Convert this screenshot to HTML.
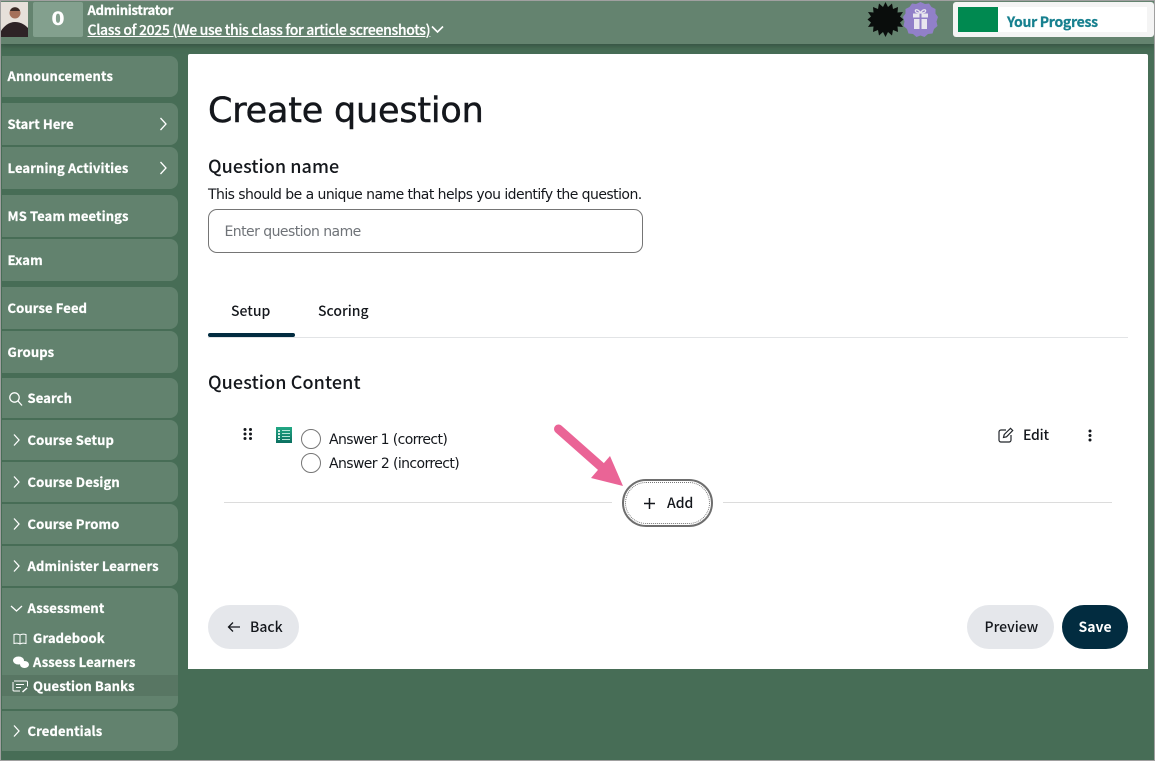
<!DOCTYPE html>
<html><head><meta charset="utf-8">
<style>
html,body{margin:0;padding:0}
body{width:1155px;height:761px;overflow:hidden;position:relative;background:#476d56;font-family:"DejaVu Sans","Liberation Sans",sans-serif;color:#14171c}
.t{position:absolute;white-space:nowrap;line-height:1}
.b{position:absolute}
.it{position:absolute;left:2px;width:176px;background:#62826e;border-radius:0 8px 8px 0}
.s{position:absolute;white-space:nowrap;line-height:1;font:bold 13px/1 "Noto Sans CJK JP","DejaVu Sans",sans-serif;color:#fff;letter-spacing:.12px;-webkit-text-stroke:.25px #fff}
.r{font-size:14px;letter-spacing:-.55px}
svg{position:absolute;overflow:visible}
</style></head><body>
<div class="b" style="left:0;top:0;width:1155px;height:1px;background:#a0a0a0;z-index:5"></div>
<div class="b" style="left:0;top:0;width:1px;height:761px;background:#a0a0a0;z-index:5"></div>
<div class="b" style="right:0;top:0;width:1px;height:761px;background:#a0a0a0;z-index:5"></div>
<div class="b" style="left:0;bottom:0;width:1155px;height:1px;background:#a0a0a0;z-index:5"></div>

<div class="b" style="left:0;top:1px;width:1155px;height:43px;background:#64836f;box-shadow:0 2px 5px rgba(40,60,50,.55)"></div>
<svg style="left:1px;top:2px" width="27" height="35" viewBox="0 0 27 35">
<rect width="27" height="35" fill="#e6e0da"/><circle cx="14" cy="11" r="5.500" fill="#a5705a"/><path d="M9 9c1-5 9-5 10 0" fill="#3a2a26"/><path d="M0 35v-6c3-5 8-9 14-9s10 3 13 6v9z" fill="#2e2326"/>
</svg>
<div class="b" style="left:33px;top:2px;width:50px;height:35px;background:#83a08e;border-radius:2px"></div>
<div class="t" style="left:33px;top:10px;width:50px;text-align:center;color:#fff;font-size:19px;font-weight:bold">0</div>
<div class="s" style="left:87.500px;top:3px;font-size:13px;letter-spacing:-.25px">Administrator</div>
<div class="s" style="left:87.500px;top:22.500px;font-size:14px;font-weight:500;text-decoration:underline;letter-spacing:-.33px">Class of 2025 (We use this class for article screenshots)</div>
<svg style="left:431px;top:25px" width="13" height="9" viewBox="0 0 13 9"><path d="M1 1.500l5.500 5.500 5.500-5.500" fill="none" stroke="#fff" stroke-width="1.600"/></svg>

<svg style="left:867px;top:1px" width="37" height="37" viewBox="0 0 37 37">
<polygon fill="#0a0d0c" points="18.500,1 21,6 25,2.500 26,8 31,6 30.500,11.500 36,11 33,15.500 36.500,18.500 33,21.500 36,26 30.500,25.500 31,31 26,29 25,34.500 21,31 18.500,36 16,31 12,34.500 11,29 6,31 6.500,25.500 1,26 4,21.500 .5,18.500 4,15.500 1,11 6.500,11.500 6,6 11,8 12,2.500 16,6"/>
</svg>
<svg style="left:903px;top:2px" width="35" height="35" viewBox="0 0 35 35">
<polygon fill="#9180c8" points="17.500,0 22,2 26,1.500 28.500,5 32.500,7 32.500,11.500 35,15 33.500,19.500 34.500,24 31,27 29.500,31.500 25,32 21.500,35 17.500,33.500 13.500,35 10,32 5.500,31.500 4,27 .5,24 1.500,19.500 0,15 2.500,11.500 2.500,7 6.500,5 9,1.500 13,2"/>
<rect x="10" y="11.500" width="15" height="4" fill="#e8e6ee"/><rect x="11" y="17" width="13" height="10" fill="#e8e6ee"/><rect x="16.500" y="11.500" width="2" height="16" fill="#9180c8"/>
<path d="M17.500 11c-2-4-6-4-5-1.500.5 1 3 1.500 5 1.500zm0 0c2-4 6-4 5-1.500-.5 1-3 1.500-5 1.500z" fill="none" stroke="#e8e6ee" stroke-width="1.300"/>
</svg>
<div class="b" style="left:953px;top:2px;width:201px;height:35px;background:#f4f4f4;border-radius:3px"></div>
<div class="b" style="left:958px;top:7px;width:189px;height:25px;background:#fff"></div>
<div class="b" style="left:958px;top:7px;width:40px;height:25px;background:#008950"></div>
<div class="s" style="left:1007px;top:15px;font-size:14px;color:#17808f;-webkit-text-stroke:.25px #17808f;letter-spacing:-.3px">Your Progress</div>

<div class="it" style="top:56px;height:41px"></div>
<div class="it" style="top:103px;height:42px"></div>
<div class="it" style="top:147px;height:42px"></div>
<div class="it" style="top:195px;height:42px"></div>
<div class="it" style="top:239px;height:42px"></div>
<div class="it" style="top:287px;height:42px"></div>
<div class="it" style="top:331px;height:42px"></div>
<div class="it" style="top:378px;height:40px"></div>
<div class="it" style="top:420px;height:40px"></div>
<div class="it" style="top:462px;height:40px"></div>
<div class="it" style="top:504px;height:40px"></div>
<div class="it" style="top:546px;height:40px"></div>
<div class="it" style="top:588px;height:121px"></div>
<div class="it" style="top:711px;height:40px"></div>
<div class="b" style="left:2px;top:675px;width:176px;height:21px;background:#587663"></div>

<div class="s" style="left:7.500px;top:69px">Announcements</div>
<div class="s" style="left:7.500px;top:117px">Start Here</div>
<div class="s" style="left:7.500px;top:161px">Learning Activities</div>
<div class="s" style="left:7.500px;top:209px">MS Team meetings</div>
<div class="s" style="left:7.500px;top:253px">Exam</div>
<div class="s" style="left:7.500px;top:301px">Course Feed</div>
<div class="s" style="left:7.500px;top:345px">Groups</div>
<div class="s" style="left:27.500px;top:391px">Search</div>
<div class="s" style="left:27.500px;top:433px">Course Setup</div>
<div class="s" style="left:27.500px;top:475px">Course Design</div>
<div class="s" style="left:27.500px;top:517px">Course Promo</div>
<div class="s" style="left:27.500px;top:559px">Administer Learners</div>
<div class="s" style="left:27.500px;top:601px">Assessment</div>
<div class="s" style="left:33px;top:631px">Gradebook</div>
<div class="s" style="left:33px;top:655px">Assess Learners</div>
<div class="s" style="left:33px;top:679px">Question Banks</div>
<div class="s" style="left:27.500px;top:724px">Credentials</div>

<svg style="left:0;top:0" width="190" height="761" fill="none" stroke="#fff" stroke-width="1.300">
<path d="M160.500 118l5.500 6-5.500 6M160.500 162l5.500 6-5.500 6"/>
<path d="M14 434.500l5 5.500-5 5.500M14 476.500l5 5.500-5 5.500M14 518.500l5 5.500-5 5.500M14 560.500l5 5.500-5 5.500M14 725.500l5 5.500-5 5.500"/>
<path d="M11 606l5.500 5 5.500-5"/>
<circle cx="14.500" cy="397.500" r="4.700"/><path d="M18 401l4 4.500"/>
<path d="M20 635c-1.500-1-4-1-6-.5v9c2-.5 4.500-.5 6 .5 1.500-1 4-1 6-.5v-9c-2-.5-4.500-.5-6 .5zm0 0v9" stroke-width="1"/>
<path d="M14 681h12.500c.5 0 1 .5 1 1v4.500M20 691h-6c-.5 0-1-.5-1-1v-8M16 684.500h8M16 687.500h5" stroke-width="1"/>
<path d="M22.500 692l4.500-4" stroke-width="1.500"/>
<ellipse cx="18.500" cy="660.500" rx="5.500" ry="4" fill="#fff" stroke="none"/><ellipse cx="24.500" cy="664.500" rx="4.500" ry="3.500" fill="#fff" stroke="none"/>
</svg>

<div class="b" style="left:188px;top:54px;width:960px;height:615px;background:#fff;border-radius:2px 2px 0 0"></div>
<div class="t" style="left:208px;top:94px;font-size:35px;letter-spacing:-.2px;color:#14171c;-webkit-text-stroke:.45px #14171c">Create question</div>
<div class="t" style="left:208px;top:157px;font-size:18px;font-weight:500;font-family:'Noto Sans CJK JP',sans-serif;letter-spacing:.05px">Question name</div>
<div class="t r" style="left:208px;top:187.500px">This should be a unique name that helps you identify the question.</div>
<div class="b" style="left:208px;top:209px;width:433px;height:42px;border:1px solid #757575;border-radius:9px"></div>
<div class="t r" style="left:224.500px;top:224.500px;color:#6f7378">Enter question name</div>
<div class="t" style="left:231px;top:304px;font-size:14px;font-weight:500;font-family:'Noto Sans CJK JP',sans-serif">Setup</div>
<div class="t" style="left:318px;top:304px;font-size:14px;font-weight:500;font-family:'Noto Sans CJK JP',sans-serif">Scoring</div>
<div class="b" style="left:208px;top:337px;width:920px;height:1px;background:#e2e4e6"></div>
<div class="b" style="left:208px;top:333px;width:87px;height:4px;background:#022c40;border-radius:2px"></div>
<div class="t" style="left:208px;top:373px;font-size:18px;font-weight:500;font-family:'Noto Sans CJK JP',sans-serif;letter-spacing:.1px">Question Content</div>

<svg style="left:243px;top:427px" width="10" height="14" fill="#14171c"><circle cx="2" cy="2.500" r="1.500"/><circle cx="7.500" cy="2.500" r="1.500"/><circle cx="2" cy="7" r="1.500"/><circle cx="7.500" cy="7" r="1.500"/><circle cx="2" cy="11.500" r="1.500"/><circle cx="7.500" cy="11.500" r="1.500"/></svg>
<svg style="left:276px;top:427px" width="16" height="16" viewBox="0 0 16 16"><defs><linearGradient id="g" x1="0" y1="0" x2="0" y2="1"><stop offset="0" stop-color="#22a884"/><stop offset="1" stop-color="#0b6f60"/></linearGradient></defs><rect width="16" height="16" fill="url(#g)"/><path d="M6 3.500h8M6 6.500h8M6 9.500h8M6 12.500h8" stroke="#b7e6d8" stroke-width="1"/><path d="M3 3v10" stroke="#d5f0e8" stroke-width="2" stroke-dasharray="2 1"/></svg>
<div class="b" style="left:301px;top:429px;width:18px;height:18px;border:1px solid #767676;border-radius:50%"></div>
<div class="b" style="left:301px;top:453px;width:18px;height:18px;border:1px solid #767676;border-radius:50%"></div>
<div class="t r" style="left:329px;top:432.500px;letter-spacing:-.62px">Answer 1 (correct)</div>
<div class="t r" style="left:329px;top:456.500px;letter-spacing:-.6px">Answer 2 (incorrect)</div>

<svg style="left:998px;top:427px" width="16" height="16" viewBox="0 0 16 16" fill="none" stroke="#22262b" stroke-width="1.200"><path d="M8 3H3a2 2 0 00-2 2v8a2 2 0 002 2h8a2 2 0 002-2V8"/><path d="M5.500 10.500l.7-3L12.500 1.300l2.200 2.200L8.500 9.800z"/></svg>
<div class="t" style="left:1023px;top:428px;font-size:14px;font-weight:500;font-family:'Noto Sans CJK JP',sans-serif;letter-spacing:-.2px">Edit</div>
<svg style="left:1087px;top:429px" width="6" height="13" fill="#14171c"><circle cx="3" cy="2" r="1.500"/><circle cx="3" cy="6.500" r="1.500"/><circle cx="3" cy="11" r="1.500"/></svg>

<div class="b" style="left:224px;top:502px;width:388px;height:1px;background:#dcdcdc"></div>
<div class="b" style="left:723px;top:502px;width:389px;height:1px;background:#dcdcdc"></div>
<div class="b" style="left:622px;top:479px;width:87px;height:44px;border:2px solid #6e6e6e;border-radius:24px;background:#fff"></div>
<div class="b" style="left:625px;top:482px;width:83px;height:40px;border:1px dotted #777;border-radius:21px"></div>
<svg style="left:643px;top:497px" width="13" height="13"><path d="M6.500 1v11M1 6.500h11" stroke="#14171c" stroke-width="1.500"/></svg>
<div class="t" style="left:667px;top:496px;font-size:14px;font-weight:500;font-family:'Noto Sans CJK JP',sans-serif">Add</div>
<svg style="left:550px;top:420px" width="80" height="70"><path d="M8.500 9L56 51" stroke="#ea6496" stroke-width="9" stroke-linecap="round"/><polygon points="73,66 60,36 41,58" fill="#ea6496"/></svg>

<div class="b" style="left:208px;top:605px;width:91px;height:44px;background:#e5e7eb;border-radius:22px"></div>
<svg style="left:227px;top:620px" width="14" height="14" fill="none" stroke="#14171c" stroke-width="1.300"><path d="M13 7H1.500M6 2.500L1.500 7 6 11.500"/></svg>
<div class="t" style="left:250px;top:620px;font-size:14px;font-weight:500;font-family:'Noto Sans CJK JP',sans-serif">Back</div>
<div class="b" style="left:967px;top:605px;width:87px;height:44px;background:#e5e7eb;border-radius:22px"></div>
<div class="t" style="left:984.500px;top:620px;font-size:14px;font-weight:500;font-family:'Noto Sans CJK JP',sans-serif">Preview</div>
<div class="b" style="left:1062px;top:605px;width:66px;height:44px;background:#022c40;border-radius:22px"></div>
<div class="t" style="left:1078.500px;top:620px;font-size:14px;font-weight:700;font-family:'Noto Sans CJK JP',sans-serif;color:#fff">Save</div>
</body></html>
